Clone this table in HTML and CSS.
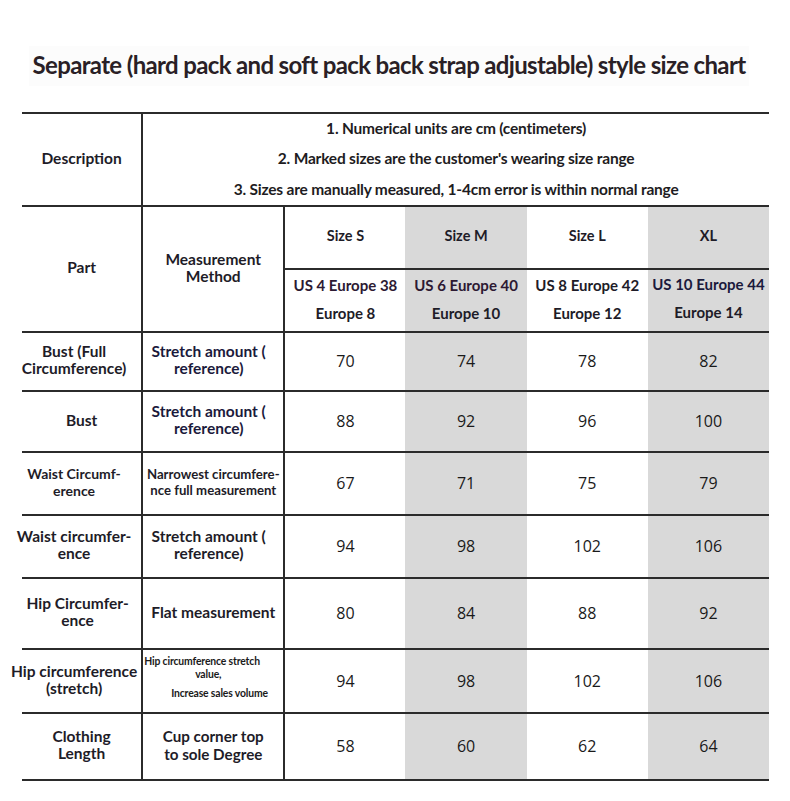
FILE: index.html
```html
<!DOCTYPE html>
<html lang="en">
<head>
<meta charset="utf-8">
<title>Size chart</title>
<link rel="stylesheet" href="styles.css">
</head>
<body>
<div class="page">
  <h1 class="title"><span class="title-box">Separate (hard pack and soft pack back strap adjustable) style size chart</span></h1>
  <table class="chart">
    <colgroup>
      <col class="c-part">
      <col class="c-method">
      <col class="c-size">
      <col class="c-size">
      <col class="c-size">
      <col class="c-size">
    </colgroup>
    <tbody>
      <tr class="r-desc">
        <td class="label vline">Description</td>
        <td class="desc" colspan="5">
          <span class="desc-line">1. Numerical units are cm (centimeters)</span>
          <span class="desc-line">2. Marked sizes are the customer's wearing size range</span>
          <span class="desc-line">3. Sizes are manually measured, 1-4cm error is within normal range</span>
        </td>
      </tr>
      <tr class="r-head">
        <td class="label vline" rowspan="2">Part</td>
        <td class="label vline" rowspan="2">Measurement<br>Method</td>
        <td class="size">Size S</td>
        <td class="size grey">Size M</td>
        <td class="size navy">Size L</td>
        <td class="size grey">XL</td>
      </tr>
      <tr class="r-sub">
        <td class="conv"><span class="plum">US 4 Europe 38</span><br>Europe 8</td>
        <td class="conv grey"><span class="plum">US 6 Europe 40</span><br>Europe 10</td>
        <td class="conv">US 8 Europe 42<br>Europe 12</td>
        <td class="conv grey up"><span class="navy">US 10 Europe 44</span><br>Europe 14</td>
      </tr>
      <tr class="r1">
        <td class="label vline shift"><span class="fit">Bust (Full<br>Circumference)</span></td>
        <td class="label vline navy trail">Stretch amount (<br>reference)</td>
        <td class="num">70</td>
        <td class="num grey">74</td>
        <td class="num">78</td>
        <td class="num grey">82</td>
      </tr>
      <tr class="r2">
        <td class="label vline">Bust</td>
        <td class="label vline navy trail">Stretch amount (<br>reference)</td>
        <td class="num">88</td>
        <td class="num grey">92</td>
        <td class="num">96</td>
        <td class="num grey">100</td>
      </tr>
      <tr class="r3">
        <td class="label vline mid shift"><span class="fit">Waist Circumf-<br>erence</span></td>
        <td class="label vline small">Narrowest circumfere-<br>nce full measurement</td>
        <td class="num">67</td>
        <td class="num grey">71</td>
        <td class="num">75</td>
        <td class="num grey">79</td>
      </tr>
      <tr class="r4">
        <td class="label vline shift"><span class="fit">Waist circumfer-<br>ence</span></td>
        <td class="label vline trail">Stretch amount (<br>reference)</td>
        <td class="num">94</td>
        <td class="num grey">98</td>
        <td class="num">102</td>
        <td class="num grey">106</td>
      </tr>
      <tr class="r5">
        <td class="label vline shift-sm"><span class="fit">Hip Circumfer-<br>ence</span></td>
        <td class="label vline">Flat measurement</td>
        <td class="num">80</td>
        <td class="num grey">84</td>
        <td class="num">88</td>
        <td class="num grey">92</td>
      </tr>
      <tr class="r6">
        <td class="label vline shift"><span class="fit">Hip circumference<br>(stretch)</span></td>
        <td class="vline tiny">
          <span class="tiny-line t1">Hip circumference stretch</span>
          <span class="tiny-line t2">value,</span>
          <span class="tiny-line t3">Increase sales volume</span>
        </td>
        <td class="num">94</td>
        <td class="num grey">98</td>
        <td class="num">102</td>
        <td class="num grey">106</td>
      </tr>
      <tr class="r7">
        <td class="label vline">Clothing<br>Length</td>
        <td class="label vline big">Cup corner top<br>to sole Degree</td>
        <td class="num">58</td>
        <td class="num grey">60</td>
        <td class="num">62</td>
        <td class="num grey">64</td>
      </tr>
    </tbody>
  </table>
</div>
</body>
</html>
```

FILE: styles.css
```css
html, body {
  margin: 0;
  padding: 0;
  background: #ffffff;
}

.page {
  width: 790px;
  height: 801px;
  overflow: hidden;
  font-family: Lato, "Liberation Sans", sans-serif;
  color: #1e1c28;
}

.title {
  margin: 0 0 32px 0;
  padding: 50px 12px 0 0;
  height: 30px;
  line-height: 30px;
  font-size: 24px;
  font-weight: 700;
  letter-spacing: -0.65px;
  text-align: center;
  color: #2a1f26;
}

.title-box {
  display: inline-block;
  padding: 0 4px;
  background: #fcfcfc;
  box-shadow: 0 -4px 0 #fcfcfc, 0 6px 0 #fcfcfc;
}

.chart {
  margin-left: 22px;
  width: 747px;
  border-collapse: collapse;
  table-layout: fixed;
}

.c-part { width: 120px; }
.c-method { width: 142px; }
.c-size { width: 121px; }

.chart td {
  padding: 0 0 3px 0;
  text-align: center;
  vertical-align: middle;
  white-space: nowrap;
  border-top: 2px solid #2b2b2b;
  border-bottom: 2px solid #2b2b2b;
}

.chart td.vline {
  border-right: 2px solid #2b2b2b;
}

.r-desc { height: 93px; }
.r-head { height: 63px; }
.r-sub { height: 63px; }
.r1 { height: 59px; }
.r2 { height: 61px; }
.r3 { height: 63px; }
.r4 { height: 63px; }
.r5 { height: 71px; }
.r6 { height: 64px; }
.r7 { height: 67px; }

.label {
  font-size: 15.5px;
  font-weight: 700;
  line-height: 17px;
  color: #1e1c28;
}

.chart td.shift {
  padding-right: 15px;
}

.chart td.shift-sm {
  padding-right: 8px;
}

.chart td.trail {
  padding-right: 9px;
}

.fit {
  display: inline-block;
  margin: 0 -15px;
}

.label.mid {
  font-size: 14px;
}

.label.small {
  font-size: 13.2px;
  line-height: 16px;
}

.label.big {
  font-size: 15.2px;
  line-height: 18px;
}

.chart td.desc {
  font-size: 15.5px;
  font-weight: 700;
  letter-spacing: -0.2px;
  color: #1e1c22;
  padding: 0 0 0 0;
}

.desc-line {
  display: block;
  line-height: 30.5px;
}

.desc-line:first-child {
  margin-top: -2px;
}

.chart td.size {
  font-size: 14.5px;
  font-weight: 700;
  color: #1e1c28;
  padding-bottom: 4px;
}

.chart td.conv {
  font-size: 15px;
  font-weight: 700;
  line-height: 28px;
  color: #1e1c28;
  padding-bottom: 3px;
}

.chart td.conv.up {
  padding-bottom: 5px;
}

.plum { color: #2d1a33; }
.navy { color: #1b1a3c; }

.chart td.num {
  font-family: "Open Sans", "Noto Sans", sans-serif;
  font-size: 16px;
  font-weight: 400;
  color: #1a1a1a;
  padding-bottom: 1px;
}

.grey {
  background: #d9d9d9;
}

.chart td.tiny {
  text-align: left;
  padding-bottom: 8px;
}

.tiny-line {
  display: block;
  font-size: 10.4px;
  font-weight: 700;
  line-height: 13px;
  letter-spacing: -0.15px;
  color: #1a1a1a;
}

.t1 { padding-left: 1px; }
.t2 { padding-left: 52px; margin-bottom: 6px; }
.t3 { padding-left: 28px; }
```
